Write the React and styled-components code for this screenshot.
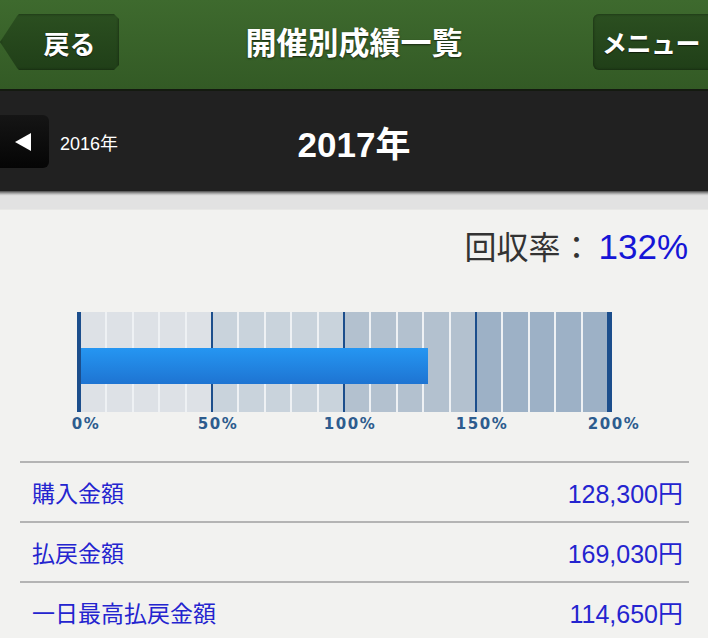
import styled, { createGlobalStyle } from "styled-components";

const GlobalStyle = createGlobalStyle`
  html, body {
    margin: 0;
    padding: 0;
    background-color: #f2f2f0;
    font-family: "Liberation Sans", "Noto Sans CJK JP", sans-serif;
  }
  * { box-sizing: border-box; }
`;

const Page = styled.div`
  width: 708px;
  height: 638px;
  overflow: hidden;
  background-color: #f2f2f0;
`;

const Header = styled.header`
  height: 91px;
  display: grid;
  grid-template-columns: 1fr auto 1fr;
  align-items: start;
  padding-top: 14px;
  background: linear-gradient(to bottom, #3e6a2e, #335a25);
  border-bottom: 2px solid #141a10;
  overflow: hidden;
`;

const NavButton = styled.button`
  height: 56px;
  border: none;
  color: #fff;
  font-family: "Noto Sans CJK JP", sans-serif;
  font-weight: 700;
  font-size: 25px;
  text-shadow: 0 1px 1px rgba(0, 0, 0, 0.6);
  background: linear-gradient(to bottom, #2b4f20, #203f18);
  box-shadow: inset 0 0 3px rgba(0, 0, 0, 0.5);
  cursor: pointer;
`;

const BackButton = styled(NavButton)`
  justify-self: start;
  width: 119px;
  padding: 0 0 0 20px;
  font-size: 26px;
  clip-path: polygon(0 50%, 17px 2px, 19px 0, calc(100% - 5px) 0, 100% 5px, 100% calc(100% - 5px), calc(100% - 5px) 100%, 19px 100%, 17px calc(100% - 2px));
`;

const MenuButton = styled(NavButton)`
  justify-self: end;
  width: 130px;
  margin-right: -15px;
  padding: 0 14px 0 0;
  border-radius: 6px;
  letter-spacing: -0.5px;
`;

const Title = styled.h1`
  margin: 0;
  height: 56px;
  line-height: 54px;
  color: #fff;
  font-family: "Noto Sans CJK JP", sans-serif;
  font-size: 31px;
  font-weight: 700;
  text-shadow: 0 1px 2px rgba(0, 0, 0, 0.6);
`;

const YearBar = styled.div`
  height: 100px;
  display: grid;
  grid-template-columns: 1fr auto 1fr;
  align-items: center;
  background-color: #212121;
`;

const YearLeft = styled.div`
  display: flex;
  align-items: center;
  gap: 11px;
  margin-top: 1px;
`;

const PrevButton = styled.button`
  width: 49px;
  height: 53px;
  border: none;
  border-radius: 0 6px 6px 0;
  background: linear-gradient(to bottom, #151515, #050505);
  display: flex;
  align-items: center;
  justify-content: center;
  padding: 0 4px 0 0;
  cursor: pointer;
`;

const Triangle = styled.span`
  width: 0;
  height: 0;
  border-top: 9px solid transparent;
  border-bottom: 9px solid transparent;
  border-right: 16px solid #fff;
`;

const PrevYear = styled.span`
  color: #fff;
  font-size: 18px;
  font-family: "Liberation Sans", "Noto Sans CJK JP", sans-serif;
`;

const CurrentYear = styled.div`
  color: #fff;
  font-size: 35px;
  font-weight: 700;
  font-family: "Liberation Sans", "Noto Sans CJK JP", sans-serif;
`;

const Shade = styled.div`
  height: 19px;
  background: linear-gradient(to bottom, #4a4a4a 0, #9a9a9a 2px, #d8d8d8 4px, #e2e2e2 5px, #e2e2e2 100%);
  border-bottom: 1px solid #e8e8e6;
`;

const Content = styled.main`
  padding: 15px 19px 0 20px;
`;

const Rate = styled.div`
  text-align: right;
  font-size: 32px;
  font-family: "Liberation Sans", "Noto Sans CJK JP", sans-serif;
  color: #333;
  height: 44px;
  line-height: 44px;
  padding-right: 1px;
`;

const RateValue = styled.span`
  color: #1515d6;
  font-size: 35px;
  margin-left: 6px;
`;

const Chart = styled.div`
  margin: 43px 0 0 57px;
  width: 535px;
`;

const Track = styled.div`
  position: relative;
  height: 100px;
  display: flex;
  gap: 2px;
  background-color: #1c4e8c;
  border-left: 4px solid #1c4e8c;
  border-right: 5px solid #1c4e8c;
`;

const Segment = styled.div`
  flex: 1;
  display: grid;
  grid-template-columns: repeat(5, 1fr);
  gap: 2px;
  background-color: #eef1f4;
`;

const Cell = styled.div`
  background-color: ${(props) => props.$tone};
`;

const Fill = styled.div`
  position: absolute;
  left: 0;
  top: 36px;
  height: 36px;
  background: linear-gradient(to bottom, #2596f2, #1e74d2);
`;

const Labels = styled.div`
  display: grid;
  grid-template-columns: repeat(5, 132px);
  margin: 3px 0 0 -57px;
`;

const Label = styled.span`
  text-align: center;
  font-family: "DejaVu Sans", sans-serif;
  font-weight: 700;
  font-size: 15px;
  letter-spacing: 1.5px;
  color: #2d5c8e;
`;

const List = styled.div`
  margin-top: 28px;
  width: 669px;
`;

const Row = styled.div`
  height: 60px;
  display: flex;
  align-items: center;
  justify-content: space-between;
  padding: 0 6px 0 12px;
  border-top: 2px solid #b4b4b4;
  color: #2424cf;
  font-size: 23px;
  font-family: "Liberation Sans", "Noto Sans CJK JP", sans-serif;
`;

const Amount = styled.span`
  font-size: 25px;
`;

const tones = ["#dde1e6", "#c9d3dc", "#b3c1cf", "#9db1c6"];
const labels = ["0%", "50%", "100%", "150%", "200%"];
const rows = [
  { name: "購入金額", value: "128,300円" },
  { name: "払戻金額", value: "169,030円" },
  { name: "一日最高払戻金額", value: "114,650円" },
];

const App = () => {
  const rate = 132;
  const inner = 526;

  return (
    <Page>
      <GlobalStyle />
      <Header>
        <BackButton>戻る</BackButton>
        <Title>開催別成績一覧</Title>
        <MenuButton>メニュー</MenuButton>
      </Header>
      <YearBar>
        <YearLeft>
          <PrevButton>
            <Triangle />
          </PrevButton>
          <PrevYear>2016年</PrevYear>
        </YearLeft>
        <CurrentYear>2017年</CurrentYear>
        <div />
      </YearBar>
      <Shade />
      <Content>
        <Rate>
          回収率：<RateValue>{rate}%</RateValue>
        </Rate>
        <Chart>
          <Track>
            {tones.map((tone) => (
              <Segment key={tone}>
                {[0, 1, 2, 3, 4].map((i) => (
                  <Cell key={i} $tone={tone} />
                ))}
              </Segment>
            ))}
            <Fill style={{ width: `${(rate / 200) * inner}px` }} />
          </Track>
          <Labels>
            {labels.map((l) => (
              <Label key={l}>{l}</Label>
            ))}
          </Labels>
        </Chart>
        <List>
          {rows.map((row) => (
            <Row key={row.name}>
              <span>{row.name}</span>
              <Amount>{row.value}</Amount>
            </Row>
          ))}
        </List>
      </Content>
    </Page>
  );
};

export default App;
